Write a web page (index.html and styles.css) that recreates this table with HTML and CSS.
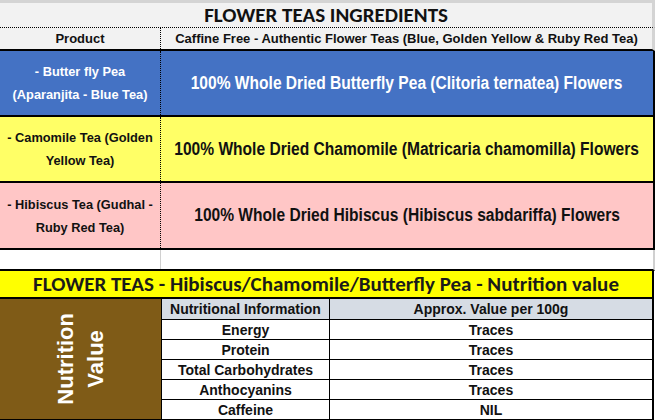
FILE: index.html
```html
<!DOCTYPE html>
<html lang="en">
<head>
<meta charset="utf-8">
<title>Flower Teas Ingredients</title>
<link rel="stylesheet" href="styles.css">
</head>
<body>
<div class="sheet">
  <div class="title">FLOWER TEAS INGREDIENTS</div>
  <div class="row head">
    <div class="c1">Product</div>
    <div class="c2">Caffine Free - Authentic Flower Teas (Blue, Golden Yellow &amp; Ruby Red Tea)</div>
  </div>
  <div class="row tea blue">
    <div class="c1">- Butter fly Pea<br>(Aparanjita - Blue Tea)</div>
    <div class="c2"><span class="big">100% Whole Dried Butterfly Pea (Clitoria ternatea) Flowers</span></div>
  </div>
  <div class="row tea yellow">
    <div class="c1">- Camomile Tea (Golden<br>Yellow Tea)</div>
    <div class="c2"><span class="big">100% Whole Dried Chamomile (Matricaria chamomilla) Flowers</span></div>
  </div>
  <div class="row tea pink">
    <div class="c1">- Hibiscus Tea (Gudhal -<br>Ruby Red Tea)</div>
    <div class="c2"><span class="big">100% Whole Dried Hibiscus (Hibiscus sabdariffa) Flowers</span></div>
  </div>
  <div class="row empty">
    <div class="c1"></div>
    <div class="c2"></div>
  </div>
  <div class="bar">FLOWER TEAS - Hibiscus/Chamomile/Butterfly Pea - Nutrition value</div>
  <div class="nutri">
    <div class="brown"><span class="vert">Nutrition<br>Value</span></div>
    <div class="nh">Nutritional Information</div>
    <div class="nh">Approx. Value per 100g</div>
    <div class="nc">Energy</div><div class="nc">Traces</div>
    <div class="nc">Protein</div><div class="nc">Traces</div>
    <div class="nc">Total Carbohydrates</div><div class="nc">Traces</div>
    <div class="nc">Anthocyanins</div><div class="nc">Traces</div>
    <div class="nc">Caffeine</div><div class="nc">NIL</div>
  </div>
</div>
</body>
</html>
```
FILE: styles.css
```css
html, body {
  margin: 0;
  padding: 0;
  background: #ffffff;
}
.sheet {
  width: 655px;
  height: 420px;
  overflow: hidden;
  font-family: "Liberation Sans", Arial, sans-serif;
  font-weight: bold;
  color: #111;
}
.title {
  box-sizing: border-box;
  width: 655px;
  height: 28px;
  border-top: 3px solid #d4d4d4;
  border-right: 3px solid #d4d4d4;
  border-bottom: 1px dotted #000;
  background: #f2f2f2;
  font-family: Carlito, Lato, sans-serif;
  font-size: 21px;
  line-height: 24px;
  text-align: center;
}
.row {
  display: grid;
  grid-template-columns: 161px 1fr;
  width: 655px;
  box-sizing: border-box;
  border-right: 2px solid #000;
}
.row .c1 {
  border-right: 1px dotted #000;
  display: flex;
  align-items: center;
  justify-content: center;
  text-align: center;
}
.row .c2 {
  display: flex;
  align-items: center;
  justify-content: center;
  text-align: center;
  overflow: hidden;
}
.head {
  height: 23px;
  background: #f2f2f2;
  border-right: 3px solid #d4d4d4;
  border-bottom: 2px solid #000;
  font-size: 13px;
}
.tea {
  height: 66px;
  border-bottom: 2px solid #000;
  font-size: 12.8px;
  line-height: 23px;
}
.big {
  display: inline-block;
  white-space: nowrap;
  font-size: 18px;
  transform: scaleX(0.865);
}
.blue { background: #4472c4; color: #fff; }
.yellow { background: #ffff66; }
.pink { background: #ffc6c6; height: 67px; }
.empty {
  height: 21px;
  background: #fff;
  border-right: 2px solid #d0d0d0;
  border-bottom: 2px solid #000;
}
.empty .c1 { border-right: 1px solid #d0d0d0; }
.bar {
  box-sizing: border-box;
  width: 654px;
  height: 28px;
  background: #ffff00;
  border-right: 2px solid #000;
  border-bottom: 2px solid #000;
  font-family: Carlito, Lato, sans-serif;
  font-size: 21px;
  line-height: 26px;
  text-align: center;
  color: #1a1a1a;
}
.nutri {
  display: grid;
  grid-template-columns: 161px 167px 322px;
  grid-template-rows: 20px repeat(5, 19px);
  gap: 1px;
  width: 652px;
  background: #000;
  border-right: 2px solid #000;
  border-bottom: 1px solid #000;
  font-size: 14px;
}
.brown {
  grid-row: 1 / 7;
  background: #7f5b17;
  display: flex;
  align-items: center;
  justify-content: center;
}
.vert {
  writing-mode: vertical-rl;
  transform: rotate(180deg);
  color: #fff;
  font-size: 22px;
  line-height: 30px;
  text-align: center;
}
.nh {
  background: #d6dce4;
  display: flex;
  align-items: center;
  justify-content: center;
}
.nc {
  background: #fff;
  display: flex;
  align-items: center;
  justify-content: center;
}
```
